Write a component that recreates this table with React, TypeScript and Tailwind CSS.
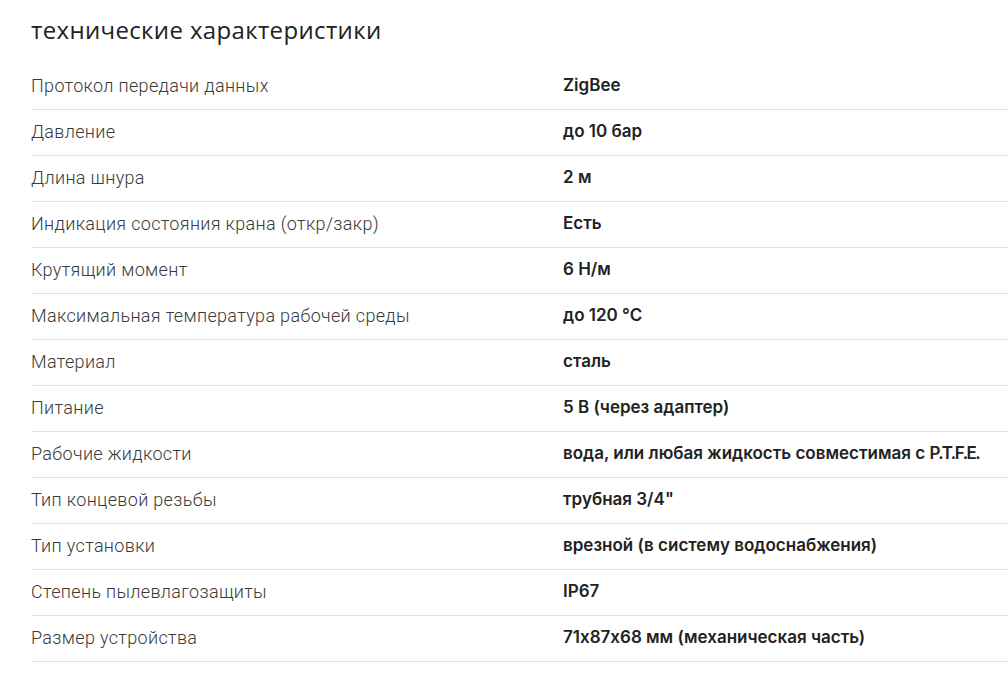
import type { ReactNode } from 'react'

const rows: [string, ReactNode][] = [
  ['Протокол передачи данных', 'ZigBee'],
  ['Давление', 'до 10 бар'],
  ['Длина шнура', '2 м'],
  ['Индикация состояния крана (откр/закр)', 'Есть'],
  ['Крутящий момент', '6 Н/м'],
  ['Максимальная температура рабочей среды', 'до 120 °C'],
  ['Материал', 'сталь'],
  ['Питание', '5 В (через адаптер)'],
  [
    'Рабочие жидкости',
    <>
      вода, или любая жидкость совместимая с <span className="tracking-[-1.5px]">P.T.F.E.</span>
    </>,
  ],
  ['Тип концевой резьбы', 'трубная 3/4"'],
  ['Тип установки', 'врезной (в систему водоснабжения)'],
  ['Степень пылевлагозащиты', 'IP67'],
  ['Размер устройства', '71x87x68 мм (механическая часть)'],
]

export default function App() {
  return (
    <div className="min-h-[680px] bg-white pl-[31px]">
      <h2 className="pt-[16px] text-[24px] font-medium leading-[28px] tracking-[0.35px] text-[#222] [font-family:'Open_Sans',sans-serif]">
        технические характеристики
      </h2>
      <div className="mt-[20px]">
        {rows.map(([label, value]) => (
          <div key={label} className="flex h-[46px] items-center border-b border-[#e2e2e2] pb-[2px]">
            <div className="w-[532px] shrink-0 text-[18px] font-light tracking-[0.33px] text-[#3a3a3a] [font-family:Roboto,sans-serif]">
              {label}
            </div>
            <div className="text-[17px] font-semibold text-[#222] [font-family:Inter,sans-serif] [font-feature-settings:'calt'_0]">
              {value}
            </div>
          </div>
        ))}
      </div>
    </div>
  )
}
